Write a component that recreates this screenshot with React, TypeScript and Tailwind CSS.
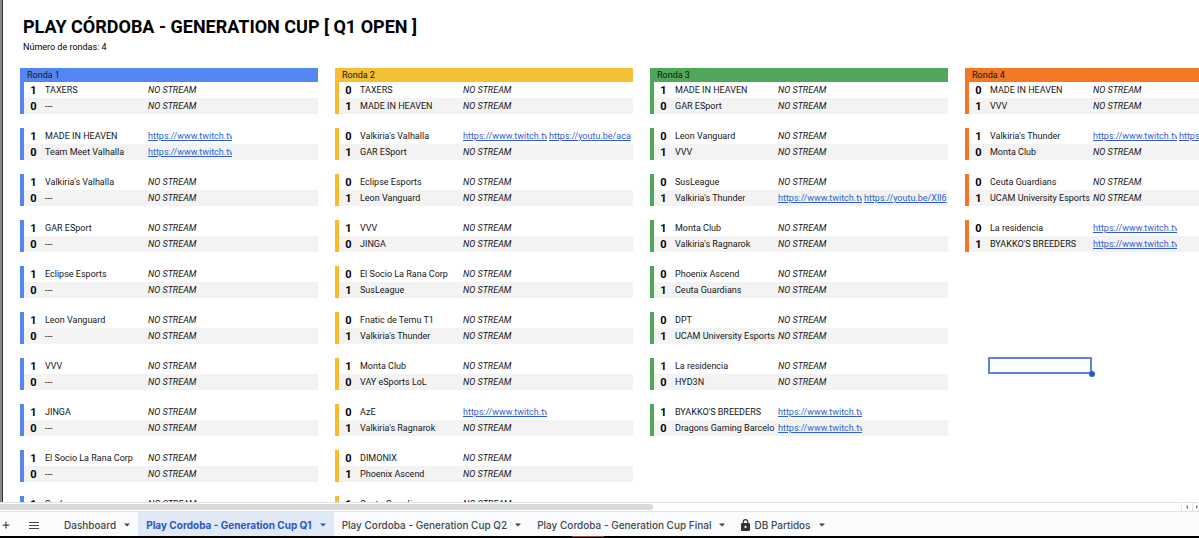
import React from "react";
import { Plus } from "lucide-react";
import { clsx } from "clsx";

type Team = { score: number; name: string; streams?: string[] };
type Match = [Team, Team];
type Round = {
  title: string;
  headClass: string;
  barClass: string;
  matches: Match[];
};

const TWITCH = "https://www.twitch.tv";

function t(score: number, name: string, streams?: string[]): Team {
  return { score, name, streams };
}

const rounds: Round[] = [
  {
    title: "Ronda 1",
    headClass: "bg-[#5486f2]",
    barClass: "bg-[#5486f2]",
    matches: [
      [t(1, "TAXERS"), t(0, "---")],
      [t(1, "MADE IN HEAVEN", [TWITCH]), t(0, "Team Meet Valhalla", [TWITCH])],
      [t(1, "Valkiria's Valhalla"), t(0, "---")],
      [t(1, "GAR ESport"), t(0, "---")],
      [t(1, "Eclipse Esports"), t(0, "---")],
      [t(1, "Leon Vanguard"), t(0, "---")],
      [t(1, "VVV"), t(0, "---")],
      [t(1, "JINGA"), t(0, "---")],
      [t(1, "El Socio La Rana Corp"), t(0, "---")],
      [t(1, "SusLeague"), t(0, "---")],
    ],
  },
  {
    title: "Ronda 2",
    headClass: "bg-[#f4bf32]",
    barClass: "bg-[#f8bb2b]",
    matches: [
      [t(0, "TAXERS"), t(1, "MADE IN HEAVEN")],
      [t(0, "Valkiria's Valhalla", [TWITCH, "https://youtu.be/aca"]), t(1, "GAR ESport")],
      [t(0, "Eclipse Esports"), t(1, "Leon Vanguard")],
      [t(1, "VVV"), t(0, "JINGA")],
      [t(0, "El Socio La Rana Corp"), t(1, "SusLeague")],
      [t(0, "Fnatic de Temu T1"), t(1, "Valkiria's Thunder")],
      [t(1, "Monta Club"), t(0, "VAY eSports LoL")],
      [t(0, "AzE", [TWITCH]), t(1, "Valkiria's Ragnarok")],
      [t(0, "DIMONIX"), t(1, "Phoenix Ascend")],
      [t(1, "Ceuta Guardians"), t(0, "---")],
    ],
  },
  {
    title: "Ronda 3",
    headClass: "bg-[#4fa75a]",
    barClass: "bg-[#4fa75a]",
    matches: [
      [t(1, "MADE IN HEAVEN"), t(0, "GAR ESport")],
      [t(0, "Leon Vanguard"), t(1, "VVV")],
      [t(0, "SusLeague"), t(1, "Valkiria's Thunder", [TWITCH, "https://youtu.be/XIl6"])],
      [t(1, "Monta Club"), t(0, "Valkiria's Ragnarok")],
      [t(0, "Phoenix Ascend"), t(1, "Ceuta Guardians")],
      [t(0, "DPT"), t(1, "UCAM University Esports")],
      [t(1, "La residencia"), t(0, "HYD3N")],
      [t(1, "BYAKKO'S BREEDERS", [TWITCH]), t(0, "Dragons Gaming Barcelo", [TWITCH])],
    ],
  },
  {
    title: "Ronda 4",
    headClass: "bg-[#f47726]",
    barClass: "bg-[#f47726]",
    matches: [
      [t(0, "MADE IN HEAVEN"), t(1, "VVV")],
      [t(1, "Valkiria's Thunder", [TWITCH, "https://youtu.be"]), t(0, "Monta Club")],
      [t(0, "Ceuta Guardians"), t(1, "UCAM University Esports")],
      [t(0, "La residencia", [TWITCH]), t(1, "BYAKKO'S BREEDERS", [TWITCH])],
    ],
  },
];

const sheets = [
  { name: "Dashboard" },
  { name: "Play Cordoba - Generation Cup Q1", active: true },
  { name: "Play Cordoba - Generation Cup Q2" },
  { name: "Play Cordoba - Generation Cup Final" },
  { name: "DB Partidos", locked: true },
];

function StreamLink({ href }: { href: string }) {
  return (
    <a href={href} className="block overflow-hidden text-[#2f5fd0] underline">
      {href}
    </a>
  );
}

function TeamRow({ team, barClass, shaded }: { team: Team; barClass: string; shaded: boolean }) {
  return (
    <tr className={clsx("h-4 leading-[15px] whitespace-nowrap", shaded && "bg-[#f3f3f3]")}>
      <td className={clsx("p-0", barClass)} />
      <td className="p-0 pt-px pl-px text-center text-[11px] leading-[15px] font-bold text-black">{team.score}</td>
      <td className="p-0 pt-px pl-[3px]">{team.name}</td>
      {team.streams ? (
        <>
          <td className="p-0 pt-px pl-[2px]">
            <StreamLink href={team.streams[0]} />
          </td>
          <td className="p-0 pt-px pl-[2px]">
            {team.streams[1] && <StreamLink href={team.streams[1]} />}
          </td>
        </>
      ) : (
        <td colSpan={2} className="p-0 pt-px pl-[2px] italic">
          NO STREAM
        </td>
      )}
    </tr>
  );
}

function RoundTable({ round }: { round: Round }) {
  return (
    <table className="w-[298px] table-fixed border-collapse text-left text-[9px] text-[#151515]">
      <colgroup>
        <col className="w-1" />
        <col className="w-[18px]" />
        <col className="w-[104px]" />
        <col className="w-[86px]" />
        <col className="w-[86px]" />
      </colgroup>
      <thead>
        <tr className={round.headClass}>
          <th colSpan={5} className="h-[14px] p-0 pt-px pl-[7px] leading-[13px] font-normal">
            {round.title}
          </th>
        </tr>
      </thead>
      {round.matches.map((match, i) => (
        <tbody key={i}>
          {i > 0 && (
            <tr>
              <td colSpan={5} className="h-[14px] p-0" />
            </tr>
          )}
          <TeamRow team={match[0]} barClass={round.barClass} shaded={false} />
          <TeamRow team={match[1]} barClass={round.barClass} shaded />
        </tbody>
      ))}
    </table>
  );
}

function SelectedCell() {
  return (
    <div className="relative mt-[105px] ml-[23px] h-[17px] w-[104px] border-2 border-[#5b82e0]">
      <span className="absolute -right-[5px] -bottom-[5px] size-[6px] rounded-full bg-[#2559cf]" />
    </div>
  );
}

function Caret() {
  return (
    <svg viewBox="0 0 6 4" className="h-1 w-[6px] shrink-0 fill-current" aria-hidden="true">
      <path d="M0 0.5h6L3 3.5z" />
    </svg>
  );
}

function Lock() {
  return (
    <svg viewBox="0 0 16 21" className="h-3 w-[9px] shrink-0" fill="#333" aria-hidden="true">
      <path
        fillRule="evenodd"
        d="M14 7h-1V5A5 5 0 0 0 3 5v2H2a2 2 0 0 0-2 2v10c0 1.100.9 2 2 2h12a2 2 0 0 0 2-2V9a2 2 0 0 0-2-2zM5 5a3 3 0 0 1 6 0v2H5zm3 11a2 2 0 1 1 0-4 2 2 0 0 1 0 4z"
      />
    </svg>
  );
}

function ScrollBar() {
  return (
    <div className="flex h-[10px] shrink-0 border-y border-[#e1e3e1] bg-white">
      <div className="min-w-0 flex-1">
        <div className="mt-px h-[6px] w-[55.3%] rounded-r-full bg-[#dadada]" />
      </div>
      <button aria-label="Desplazar a la izquierda" className="flex w-[11px] items-center justify-center border-l border-[#e1e3e1]">
        <svg viewBox="0 0 4 4" className="size-1 fill-[#777]">
          <path d="M3 0v4L1 2z" />
        </svg>
      </button>
      <button aria-label="Desplazar a la derecha" className="flex w-[7px] items-center justify-end border-l border-[#e1e3e1]">
        <svg viewBox="0 0 4 4" className="size-1 fill-[#777]">
          <path d="M1 0v4l2-2z" />
        </svg>
      </button>
    </div>
  );
}

function SheetTabs() {
  return (
    <nav className="flex h-6 shrink-0 items-stretch bg-[#f9fbfd] font-[Inter,sans-serif] text-[10px] font-medium text-[#444746]">
      <button aria-label="Añadir hoja" className="flex w-3 items-center justify-center pt-[2px]">
        <Plus className="size-[10px]" strokeWidth={3} />
      </button>
      <button aria-label="Todas las hojas" className="ml-4 flex w-3 items-center justify-center pt-[2px]">
        <svg viewBox="0 0 10 7" className="h-[7px] w-[10px] fill-current">
          <path d="M0 0h10v1H0zM0 3h10v1H0zM0 6h10v1H0z" />
        </svg>
      </button>
      <div className="ml-4 flex">
        {sheets.map((sheet) => (
          <button
            key={sheet.name}
            className={clsx(
              "flex items-center gap-2 px-2 pt-[2px] whitespace-nowrap",
              sheet.active && "bg-[#e1e9f7] font-bold text-[#2a56c6]"
            )}
          >
            <span className="flex items-center gap-1">
              {sheet.locked && <Lock />}
              {sheet.name}
            </span>
            <Caret />
          </button>
        ))}
      </div>
    </nav>
  );
}

export default function App() {
  return (
    <div className="flex h-screen flex-col overflow-hidden bg-white font-[Roboto,sans-serif] text-black">
      <main className="min-h-0 flex-1 overflow-hidden border-l-2 border-[#8a8a8a]">
        <div className="h-full overflow-hidden border-l border-[#333] pl-[17px]">
          <h1 className="mt-4 ml-[3px] text-[18px] leading-[22px] font-bold">
            PLAY CÓRDOBA - GENERATION CUP [ Q1 OPEN ]
          </h1>
          <p className="mt-[2px] ml-[3px] text-[9px] leading-[14px]">Número de rondas: 4</p>
          <div className="mt-[14px] flex w-max gap-[17px]">
            {rounds.map((round, i) => (
              <div key={round.title}>
                <RoundTable round={round} />
                {i === rounds.length - 1 && <SelectedCell />}
              </div>
            ))}
          </div>
        </div>
      </main>
      <ScrollBar />
      <SheetTabs />
      <div className="h-[2px] shrink-0 bg-black">
        <div className="ml-[47.7%] h-px w-8 bg-[#8a4632]" />
      </div>
    </div>
  );
}
